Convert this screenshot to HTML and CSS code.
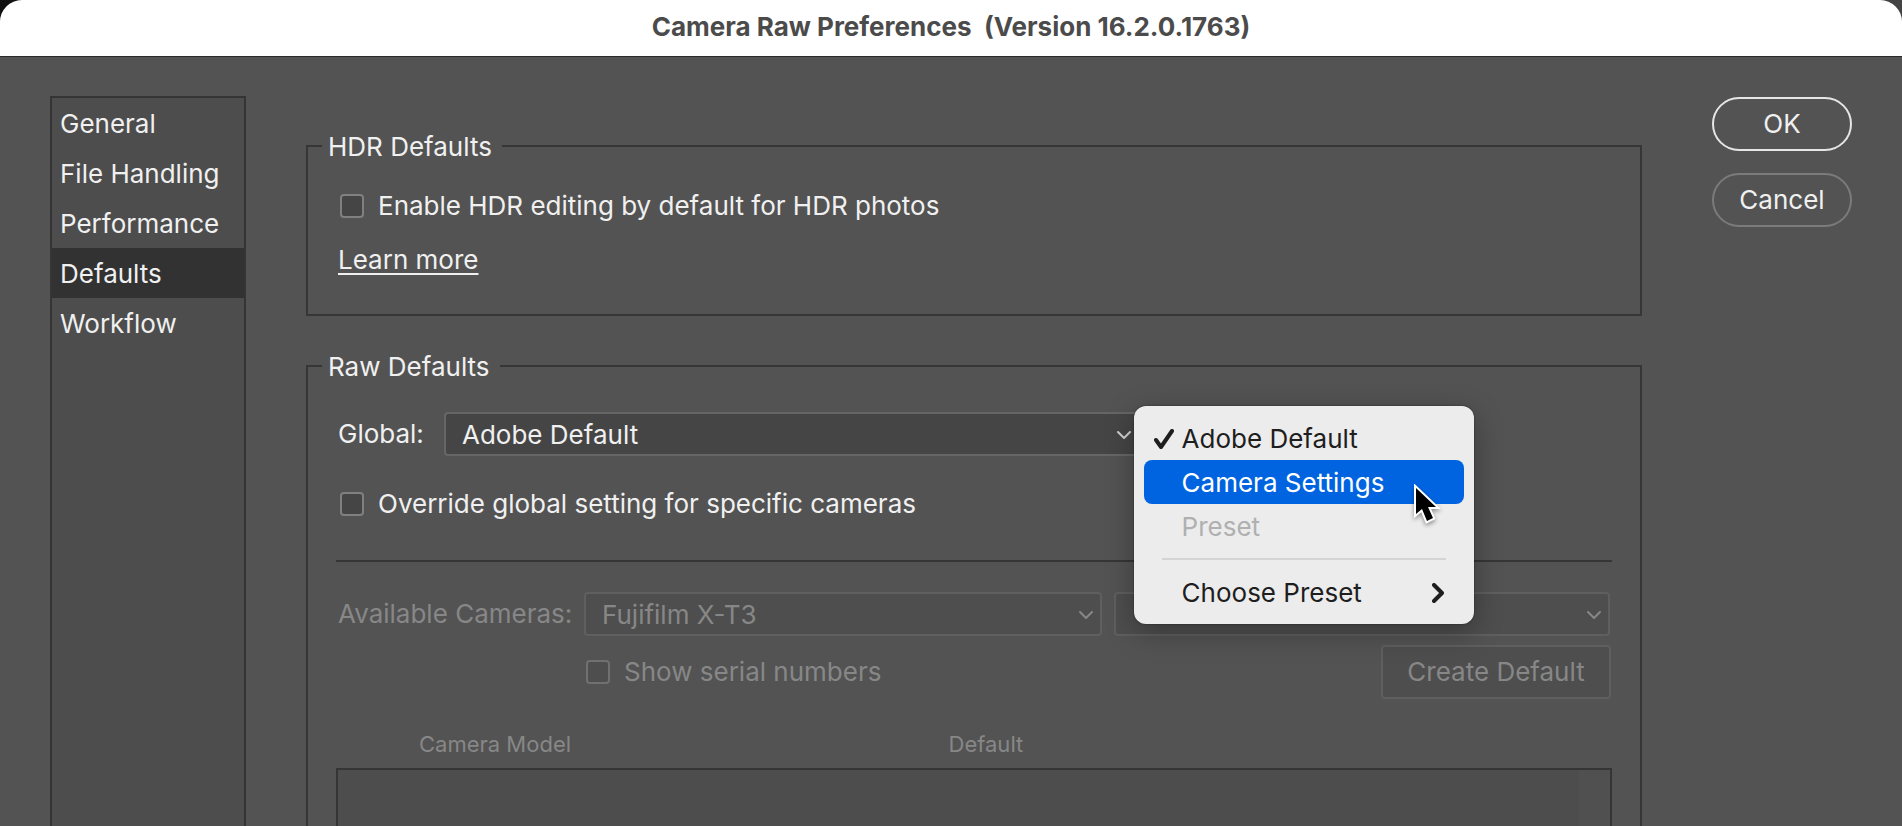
FILE: index.html
```html
<!DOCTYPE html>
<html lang="en">

<head>
    <meta charset="UTF-8">
    <meta name="viewport" content="width=device-width, initial-scale=1.0">
    <title>Camera Raw Preferences</title>
    <link rel="stylesheet" href="styles.css">
</head>

<body>
    <div class="window">
        <header class="titlebar">
            <h1>Camera Raw Preferences&nbsp; (Version 16.2.0.1763)</h1>
        </header>

        <div class="content">
            <nav class="sidebar">
                <a href="#general">General</a>
                <a href="#file-handling">File Handling</a>
                <a href="#performance">Performance</a>
                <a href="#defaults" class="active">Defaults</a>
                <a href="#workflow">Workflow</a>
            </nav>

            <main class="panel">
                <fieldset class="group">
                    <legend>HDR Defaults</legend>
                    <label class="check"><input type="checkbox"> Enable HDR editing by default for HDR photos</label>
                    <a class="learn" href="#learn">Learn more</a>
                </fieldset>

                <fieldset class="group raw">
                    <legend>Raw Defaults</legend>
                    <div class="row">
                        <label class="global-label" for="global">Global:</label>
                        <div class="select global">
                            <select id="global">
                                <option>Adobe Default</option>
                                <option>Camera Settings</option>
                            </select>
                            <svg class="chevron" viewBox="0 0 14 10"><path d="M1 2l6 6 6-6" /></svg>

                            <div class="menu">
                                <button class="item">
                                    <svg class="tick" viewBox="0 0 20 20"><path d="M2 11l5 7L18 2" /></svg>
                                    Adobe Default
                                </button>
                                <button class="item selected">Camera Settings</button>
                                <button class="item" disabled>Preset</button>
                                <hr>
                                <button class="item">
                                    Choose Preset
                                    <svg class="arrow" viewBox="0 0 12 20"><path d="M2 2l8 8-8 8" /></svg>
                                </button>
                                <svg class="cursor" viewBox="0 0 28 42">
                                    <path d="M3 4v26l6-5 5 12 6-3-5-11h8z" />
                                </svg>
                            </div>
                        </div>
                    </div>

                    <label class="check"><input type="checkbox"> Override global setting for specific cameras</label>

                    <hr class="divider">

                    <div class="row cameras">
                        <label class="camera-label" for="camera">Available Cameras:</label>
                        <div class="select camera">
                            <select id="camera" disabled>
                                <option>Fujifilm X-T3</option>
                            </select>
                            <svg class="chevron" viewBox="0 0 14 10"><path d="M1 2l6 6 6-6" /></svg>
                        </div>
                        <div class="select setting">
                            <select aria-label="Default for camera" disabled>
                                <option></option>
                            </select>
                            <svg class="chevron" viewBox="0 0 14 10"><path d="M1 2l6 6 6-6" /></svg>
                        </div>
                    </div>

                    <div class="row serial">
                        <label class="check off"><input type="checkbox" disabled> Show serial numbers</label>
                        <button class="create" disabled>Create Default</button>
                    </div>

                    <table>
                        <thead>
                            <tr>
                                <th class="model">Camera Model</th>
                                <th>Default</th>
                                <th class="scroll"></th>
                            </tr>
                        </thead>
                        <tbody>
                            <tr>
                                <td></td>
                                <td></td>
                                <td class="scroll"></td>
                            </tr>
                        </tbody>
                    </table>
                </fieldset>
            </main>

            <div class="actions">
                <button class="ok">OK</button>
                <button>Cancel</button>
            </div>
        </div>
    </div>
</body>

</html>
```

FILE: styles.css
```css
* {
    margin: 0;
    padding: 0;
    box-sizing: border-box;
}

body {
    background: linear-gradient(to right, #111, #444);
    color: #f0f0f0;
    font-family: Inter, "Liberation Sans", sans-serif;
    font-size: 26px;
    line-height: 28px;
}

button,
select {
    font: inherit;
    color: inherit;
}

svg {
    fill: none;
    stroke: currentColor;
    stroke-linecap: round;
    stroke-linejoin: round;
}

.window {
    height: 100vh;
    display: flex;
    flex-direction: column;
    overflow: hidden;
    background-color: #535353;
    border-radius: 22px 22px 0 0;
}

.titlebar {
    padding: 13px 0 15px;
    background-color: #fff;
    border-bottom: 1px solid #2b2b2b;
    color: #4b4b4b;
    text-align: center;
}

.titlebar h1 {
    font-size: 26px;
    font-weight: 700;
}

.content {
    flex: 1;
    min-height: 0;
    display: flex;
    padding: 39px 50px 0;
}

/* left list */
.sidebar {
    width: 196px;
    flex-shrink: 0;
    background-color: #4d4d4d;
    border: 2px solid #353535;
    border-bottom: none;
}

.sidebar a {
    display: block;
    padding: 2px 0 0 8px;
    color: inherit;
    line-height: 48px;
    text-decoration: none;
    white-space: nowrap;
}

.sidebar .active {
    background-color: #323232;
}

/* middle */
.panel {
    flex: 1;
    min-width: 0;
    margin: 34px 70px 0 60px;
}

.group {
    display: flex;
    flex-direction: column;
    padding: 30px 28px 40px;
    margin-bottom: 34px;
    border: 2px solid #363636;
}

legend {
    padding: 2px 10px 0 6px;
    margin-left: -14px;
    line-height: 30px;
}

.check {
    display: flex;
    align-items: center;
    gap: 14px;
    padding-left: 4px;
}

.check input {
    appearance: none;
    width: 24px;
    height: 24px;
    background-color: #454545;
    border: 2px solid #808080;
    border-radius: 4px;
}

.learn {
    align-self: flex-start;
    margin: 26px 2px 0;
    color: inherit;
    text-decoration-thickness: 2px;
    text-underline-offset: 4px;
}

.row {
    display: flex;
    align-items: center;
    padding: 0 2px;
}

.raw .check {
    margin-top: 34px;
}

.global-label {
    width: 106px;
}

.camera-label {
    width: 246px;
}

.select {
    position: relative;
}

.select select {
    appearance: none;
    display: block;
    width: 100%;
    height: 44px;
    padding: 1px 40px 0 16px;
    background-color: #454545;
    border: 2px solid #666;
    border-radius: 4px;
    opacity: 1;
}

.chevron {
    position: absolute;
    right: 9px;
    top: 18px;
    width: 14px;
    height: 10px;
    stroke-width: 2;
    pointer-events: none;
}

.global {
    width: 55%;
}

.global .chevron {
    right: 13px;
    color: #d0d0d0;
}

.divider {
    height: 2px;
    margin: 42px 0 30px;
    background-color: #363636;
    border: none;
}

.cameras,
.off,
.create,
table {
    color: #878787;
}

.cameras .select select {
    background-color: #4e4e4e;
    border-color: #5f5f5f;
}

.check.off input {
    background-color: #4e4e4e;
    border-color: #707070;
}

.camera {
    flex: 518;
    margin-right: 12px;
}

.setting {
    flex: 496;
}

.serial {
    justify-content: space-between;
    margin-top: 9px;
    padding: 0 1px 0 248px;
}

.raw .off {
    margin-top: 0;
    padding-left: 2px;
}

.create {
    width: 230px;
    height: 54px;
    background-color: #4e4e4e;
    border: 2px solid #5f5f5f;
    border-radius: 4px;
}

table {
    margin-top: 31px;
    border-collapse: collapse;
    table-layout: fixed;
}

th {
    padding-bottom: 10px;
    font-size: 22px;
    font-weight: 400;
    text-align: left;
}

.model {
    width: 48%;
    padding-left: 82px;
}

.scroll {
    width: 32px;
}

tbody {
    background-color: #4d4d4d;
    border: 2px solid #353535;
}

td {
    height: 160px;
}

td.scroll {
    background-color: #505050;
}

/* open popup of the Global drop-down */
.menu {
    position: absolute;
    z-index: 1;
    left: calc(100% - 10px);
    top: -6px;
    width: 340px;
    padding: 10px;
    background-color: #ececec;
    border-radius: 12px;
    box-shadow: 0 0 2px rgba(0, 0, 0, 0.5), 0 8px 30px rgba(0, 0, 0, 0.3);
    color: #1e1e1e;
}

.item {
    position: relative;
    display: block;
    width: 100%;
    height: 44px;
    padding: 2px 0 0 38px;
    background: none;
    border: none;
    border-radius: 8px;
    text-align: left;
}

.item.selected {
    background-color: #0064e1;
    color: #fff;
}

.item:disabled {
    color: #b0b0b0;
}

.menu hr {
    height: 2px;
    margin: 10px 18px;
    background-color: #d4d4d4;
    border: none;
}

.tick,
.arrow {
    position: absolute;
    top: 13px;
    height: 20px;
    stroke-width: 4;
}

.tick {
    left: 10px;
    width: 20px;
}

.arrow {
    right: 20px;
    width: 12px;
}

.cursor {
    position: absolute;
    left: 279px;
    top: 78px;
    width: 28px;
    height: 42px;
    fill: #000;
    stroke: #fff;
    stroke-width: 4;
    stroke-linejoin: miter;
    paint-order: stroke;
    filter: drop-shadow(0 2px 2px rgba(0, 0, 0, 0.4));
}

/* right buttons */
.actions {
    display: flex;
    flex-direction: column;
    gap: 22px;
    margin-top: 1px;
}

.actions button {
    width: 140px;
    height: 54px;
    background: none;
    border: 2px solid #7b7b7b;
    border-radius: 27px;
}

.actions .ok {
    border-color: #e6e6e6;
}
```
